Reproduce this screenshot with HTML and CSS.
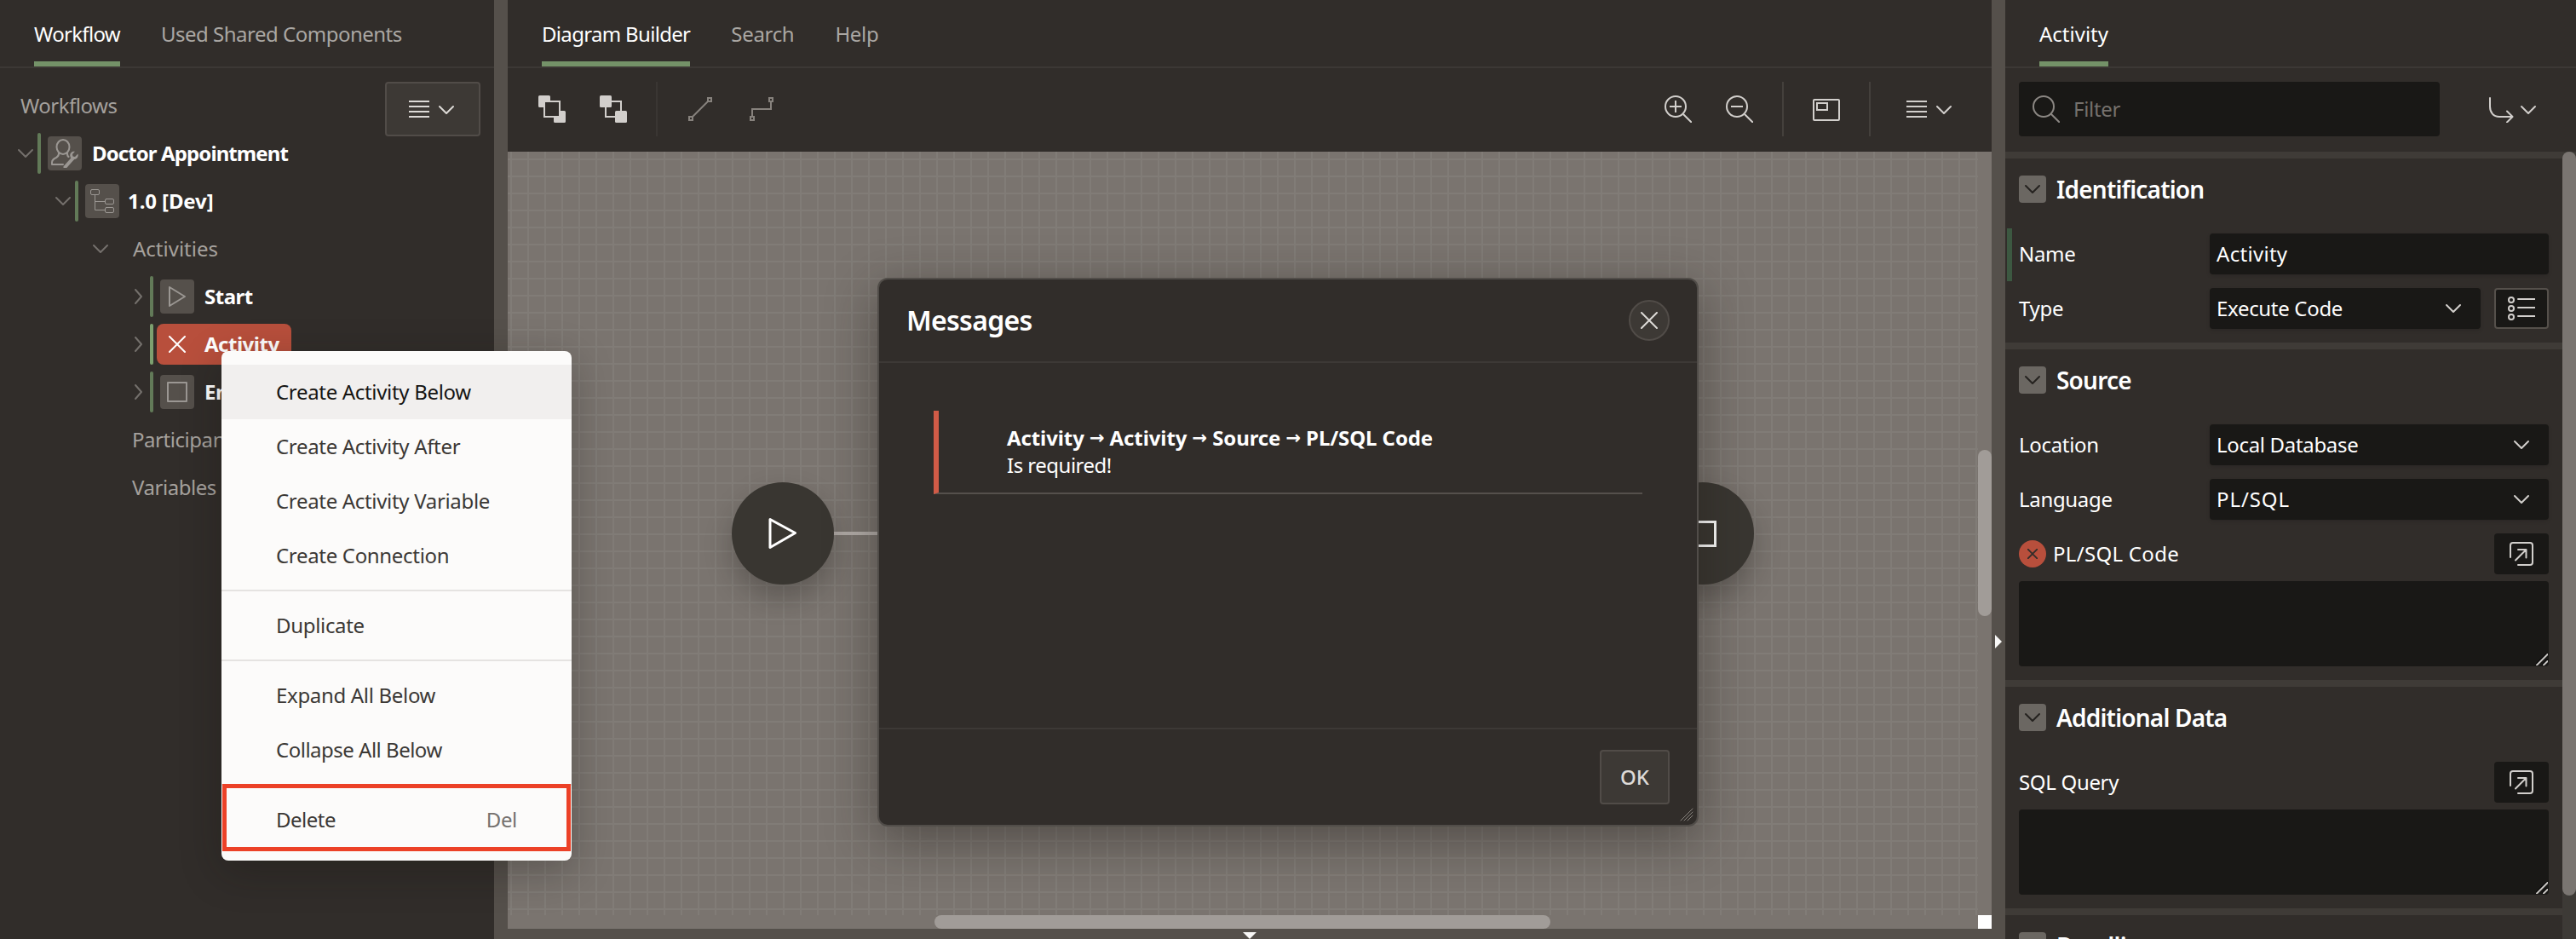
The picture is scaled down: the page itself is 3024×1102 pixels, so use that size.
FILE: index.html
```html
<!DOCTYPE html>
<html lang="en">
<head>
<meta charset="utf-8">
<title>Workflow Designer</title>
<link rel="stylesheet" href="styles.css">
</head>
<body>
<svg class="defs" aria-hidden="true">
  <symbol id="chev-down" viewBox="0 0 20 12"><path d="M2 2l8 8 8-8"/></symbol>
  <symbol id="chev-right" viewBox="0 0 12 20"><path d="M2 2l7 8-7 8"/></symbol>
  <symbol id="lines" viewBox="0 0 24 20"><path d="M0 1h24M0 7h24M0 13h24M0 19h24"/></symbol>
  <symbol id="cross" viewBox="0 0 20 20"><path d="M1 1l18 18M19 1L1 19"/></symbol>
  <symbol id="popup" viewBox="0 0 28 28"><path d="M1 18V4a3 3 0 0 1 3-3h20a3 3 0 0 1 3 3v20a3 3 0 0 1-3 3H10M7 21.500L19.500 9M10 9h9.500v9.500"/></symbol>
  <symbol id="grip" viewBox="0 0 14 14"><path class="grip-edge" d="M0 13L13 0M8 13l5-5"/><path d="M1 13.500L13.500 1M9 13.500l4.500-4.500"/></symbol>
</svg>
<div class="app">
  <aside class="panel tree-panel">
    <nav class="tabs">
      <span class="tab active">Workflow</span>
      <span class="tab snug">Used Shared Components</span>
    </nav>
    <div class="tree-head">
      <span class="tree-title">Workflows</span>
      <button class="menu-button"><svg class="i-lines"><use href="#lines"/></svg><svg class="i-down"><use href="#chev-down"/></svg></button>
    </div>
    <ul class="tree">
      <li class="row l1"><svg class="i-down"><use href="#chev-down"/></svg><i class="mark"></i>
        <span class="badge"><svg width="34" height="34" viewBox="0 0 34 34"><ellipse cx="15" cy="9.500" rx="7.500" ry="8.500"/><path d="M10 17c0 3-1 4-3 5-3 1.500-5 2.500-5 5.500V30h13M20 17c0 2 .5 3.500 1.500 4"/><path class="wrench" d="M17.500 33l8.500-9.500"/><path class="wrench-head" d="M32.500 17.500l-3.500 3.500-2.500-.5-.5-2.500 3-3.200c-3-.8-6 1.400-5.800 4.800.1 3 2.500 4.800 5.300 4.500 3-.4 4.900-3.500 4-6.600z"/></svg></span>
        <b class="tight">Doctor Appointment</b></li>
      <li class="row l2"><svg class="i-down"><use href="#chev-down"/></svg><i class="mark"></i>
        <span class="badge"><svg width="34" height="34" viewBox="0 0 34 34"><g class="thin"><rect x="3.500" y="3.500" width="10" height="6" rx="1.500"/><rect x="20.500" y="14.500" width="10" height="6" rx="1.500"/><rect x="20.500" y="24.500" width="10" height="6" rx="1.500"/><path d="M8.500 9.500v18h12M8.500 17.500h12"/></g></svg></span>
        <b>1.0 [Dev]</b></li>
      <li class="row l3"><svg class="i-down"><use href="#chev-down"/></svg><span class="plain loose">Activities</span></li>
      <li class="row l4"><svg class="i-right"><use href="#chev-right"/></svg><i class="mark"></i>
        <span class="badge"><svg width="24" height="28" viewBox="0 0 24 28"><path d="M3 3l18 11L3 25z"/></svg></span><b class="snug">Start</b></li>
      <li class="row l4"><svg class="i-right"><use href="#chev-right"/></svg><i class="mark lit"></i>
        <span class="selected"><svg width="20" height="20"><use href="#cross"/></svg><b class="snug">Activity</b></span></li>
      <li class="row l4"><svg class="i-right"><use href="#chev-right"/></svg><i class="mark"></i>
        <span class="badge"><svg width="24" height="24" viewBox="0 0 24 24"><rect x="1" y="1" width="22" height="22"/></svg></span><b>End</b></li>
      <li class="row l3 leaf"><span>Participants</span></li>
      <li class="row l3 leaf"><span>Variables</span></li>
    </ul>
  </aside>
  <div class="splitter"></div>
  <main class="panel diagram-panel">
    <nav class="tabs">
      <span class="tab active">Diagram Builder</span>
      <span class="tab">Search</span>
      <span class="tab">Help</span>
    </nav>
    <div class="toolbar">
      <svg class="tool" viewBox="0 0 32 32"><path class="fill" d="M1.500 0h11a1.500 1.500 0 0 1 1.500 1.500V14H1.500A1.500 1.500 0 0 1 0 12.500v-11A1.500 1.500 0 0 1 1.500 0zM18 18h12.500a1.500 1.500 0 0 1 1.500 1.500v11a1.500 1.500 0 0 1-1.500 1.500h-11a1.500 1.500 0 0 1-1.500-1.500z"/><rect class="cover" x="7" y="7" width="18" height="18"/></svg>
      <svg class="tool" viewBox="0 0 32 32"><rect x="7" y="7" width="18" height="18"/><rect class="fill" width="14" height="14" rx="1.500"/><rect class="fill" x="18" y="18" width="14" height="14" rx="1.500"/></svg>
      <i class="rule dim"></i>
      <svg class="tool off" viewBox="0 0 32 32"><rect x="3" y="25" width="4" height="4"/><rect x="25" y="3" width="4" height="4"/><path d="M7 25L25 7"/></svg>
      <svg class="tool off" viewBox="0 0 32 32"><rect x="3" y="25" width="4" height="4"/><rect x="25" y="3" width="4" height="4"/><path d="M5 25v-9h22V7"/></svg>
      <span class="grow"></span>
      <svg class="tool" viewBox="0 0 32 32"><circle cx="13" cy="13" r="12"/><path d="M22 22l10 10M13 6v14M6 13h14"/></svg>
      <svg class="tool" viewBox="0 0 32 32"><circle cx="13" cy="13" r="12"/><path d="M22 22l10 10M6 13h14"/></svg>
      <i class="rule"></i>
      <svg class="tool" viewBox="0 0 32 32"><rect x="1" y="5" width="30" height="24" rx="1"/><rect x="5" y="9" width="12" height="8"/></svg>
      <i class="rule"></i>
      <span class="list-menu"><svg class="i-lines"><use href="#lines"/></svg><svg class="i-down"><use href="#chev-down"/></svg></span>
    </div>
    <div class="canvas">
      <div class="grid"></div>
      <div class="link"></div>
      <div class="node start"><svg width="36" height="38" viewBox="0 0 36 38"><path d="M3 2.500l29.500 16L3 35.500z"/></svg></div>
      <div class="node end"><svg width="32" height="31" viewBox="0 0 32 31"><rect x="1.500" y="1.500" width="29" height="28"/></svg></div>
      <i class="thumb-v"></i><i class="thumb-h"></i><i class="corner"></i>
    </div>
    <div class="splitter-h"><i></i></div>
  </main>
  <div class="splitter collapse"><i></i></div>
  <aside class="panel props-panel">
    <nav class="tabs"><span class="tab active loose">Activity</span></nav>
    <div class="filter-bar">
      <div class="filter"><svg width="32" height="32" viewBox="0 0 32 32"><circle cx="13" cy="13" r="12"/><path d="M22 22l10 10"/></svg><span>Filter</span></div>
      <div class="goto"><svg width="30" height="32" viewBox="0 0 30 32"><path d="M2 3v10c0 7 4 12 11 12h15M22 18.500l6.500 6.500-6.500 6.500"/></svg><svg class="i-down"><use href="#chev-down"/></svg></div>
    </div>
    <div class="props">
      <div class="groups">
        <section class="group">
          <h2><span class="fold"><svg class="i-down"><use href="#chev-down"/></svg></span><span>Identification</span></h2>
          <div class="field changed"><label>Name</label><div class="input"><span class="wide-set">Activity</span></div></div>
          <div class="field"><label>Type</label><div class="input"><span>Execute Code</span><svg class="i-down"><use href="#chev-down"/></svg></div>
            <button class="square outlined"><svg width="32" height="28" viewBox="0 0 32 28"><circle cx="4" cy="4" r="3"/><circle cx="4" cy="14" r="3"/><circle cx="4" cy="24" r="3"/><path d="M12 3h20M12 13h20M12 23h20"/></svg></button></div>
        </section>
        <section class="group">
          <h2><span class="fold"><svg class="i-down"><use href="#chev-down"/></svg></span><span>Source</span></h2>
          <div class="field"><label>Location</label><div class="input"><span>Local Database</span><svg class="i-down"><use href="#chev-down"/></svg></div></div>
          <div class="field"><label>Language</label><div class="input"><span class="open-set">PL/SQL</span><svg class="i-down"><use href="#chev-down"/></svg></div></div>
          <div class="field"><span class="error"><svg width="12" height="12" viewBox="0 0 20 20"><use href="#cross"/></svg></span><label class="wide wide-set">PL/SQL Code</label><button class="square"><svg width="28" height="28"><use href="#popup"/></svg></button></div>
          <div class="area"><svg width="14" height="14"><use href="#grip"/></svg></div>
        </section>
        <section class="group">
          <h2><span class="fold"><svg class="i-down"><use href="#chev-down"/></svg></span><span>Additional Data</span></h2>
          <div class="field"><label class="wide">SQL Query</label><button class="square"><svg width="28" height="28"><use href="#popup"/></svg></button></div>
          <div class="area"><svg width="14" height="14"><use href="#grip"/></svg></div>
        </section>
        <section class="group">
          <h2><span class="fold"><svg class="i-down"><use href="#chev-down"/></svg></span><span>Deadline</span></h2>
        </section>
      </div>
      <div class="track"><i></i></div>
    </div>
  </aside>
</div>

<div class="dialog">
  <header><h1>Messages</h1><button class="close"><svg width="20" height="20"><use href="#cross"/></svg></button></header>
  <div class="dialog-body">
    <div class="message"><b>Activity <i>→</i> Activity <i>→</i> Source <i>→</i> PL/SQL Code</b><span class="snug">Is required!</span></div>
  </div>
  <footer><button class="ok">OK</button></footer>
  <svg class="resizer" viewBox="0 0 16 16"><path d="M1 15L15 1M5 15L15 5M9 15l6-6"/></svg>
</div>

<ul class="menu">
  <li class="item hover"><span>Create Activity Below</span></li>
  <li class="item"><span>Create Activity After</span></li>
  <li class="item"><span>Create Activity Variable</span></li>
  <li class="item"><span>Create Connection</span></li>
  <li class="sep"></li>
  <li class="item"><span>Duplicate</span></li>
  <li class="sep"></li>
  <li class="item"><span>Expand All Below</span></li>
  <li class="item"><span class="snug">Collapse All Below</span></li>
  <li class="sep"></li>
  <li class="item"><span class="snug">Delete</span><kbd>Del</kbd></li>
  <li class="callout"></li>
</ul>
</body>
</html>
```
FILE: styles.css
```css
* { box-sizing: border-box; }
body { margin: 0; height: 1102px; overflow: hidden; background: #312d2a; color: #fff; font: 24px/32px "Noto Sans", sans-serif; letter-spacing: -.32px; }
ul { margin: 0; padding: 0; list-style: none; }
h1, h2 { margin: 0; }
button { font: inherit; color: inherit; padding: 0; border: 0; background: none; }
svg { display: block; flex: none; fill: none; stroke: currentColor; stroke-width: 2; stroke-linecap: round; stroke-linejoin: round; }
.defs { position: absolute; width: 0; height: 0; }
.i-down { width: 20px; height: 12px; }
.i-right { width: 12px; height: 20px; }
.i-lines { width: 24px; height: 20px; stroke-linecap: butt; }

.tight { letter-spacing: -.9px; }
.snug { letter-spacing: -.5px; }
.loose { letter-spacing: 0; }
.wide-set { letter-spacing: .3px; }
.open-set { letter-spacing: .9px; }

.app { display: flex; height: 1102px; }
.panel { display: flex; flex-direction: column; }
.tree-panel { width: 580px; }
.diagram-panel { width: 1742px; }
.props-panel { width: 670px; }
.splitter { width: 16px; background: #55504b; }
.splitter.collapse { display: flex; align-items: center; padding: 404px 0 0 4px; }
.splitter.collapse i { border: 8px solid transparent; border-left-color: #f8f7f6; border-right: 0; }

.tabs { display: flex; flex: none; gap: 48px; height: 80px; padding-left: 40px; border-bottom: 2px solid #3c3835; }
.tab { color: #aaa7a3; line-height: 80px; height: 78px; white-space: nowrap; }
.tab.active { color: #fff; font-weight: 450; border-bottom: 6px solid #749268; }
.tab.active:not(.loose) { letter-spacing: -.68px; }

.tree-head { display: flex; justify-content: space-between; height: 72px; padding: 16px 16px 0 24px; color: #a5a19d; }
.tree-title { line-height: 56px; letter-spacing: -.5px; }
.menu-button { display: flex; align-items: center; gap: 10px; width: 112px; height: 64px; padding-left: 26px; border: 2px solid #514c48; border-radius: 4px; background: #3d3935; color: #dddad7; }
.menu-button .i-down { margin-top: 2px; }
.row { display: flex; align-items: center; height: 56px; color: #74706c; }
.l1 { padding-left: 20px; }
.l2 { padding-left: 64px; }
.l3 { padding-left: 108px; }
.l4 { padding-left: 157px; }
.leaf { padding-left: 155px; color: #a5a19d; letter-spacing: -.45px; }
.plain { margin-left: 28px; color: #a5a19d; }
.row b { color: #fff; font-weight: 700; }
.l2 b { margin-left: -2px; letter-spacing: -.1px; }
.mark { width: 4px; height: 48px; margin: 0 8px 0 4px; border-radius: 2px; background: #627a58; }
.l4 .mark { margin-left: 7px; }
.mark.lit { background: #7ca06f; }
.l4 .mark.lit { margin-right: 4px; }
.badge { display: flex; align-items: center; justify-content: center; width: 40px; height: 40px; margin-right: 12px; border-radius: 4px; background: #55504b; color: #9b9793; }
.thin { stroke-width: 1; }
.wrench { stroke-width: 4; }
.wrench-head { fill: currentColor; stroke: none; }
.selected { display: flex; align-items: center; gap: 22px; width: 158px; height: 48px; padding-left: 14px; border-radius: 8px; background: #b84f3c; color: #fff; }

.toolbar { display: flex; flex: none; align-items: center; height: 98px; padding: 0 36px 2px; color: #d2cfcc; }
.tool { width: 32px; height: 32px; margin-right: 40px; stroke-linejoin: miter; stroke-linecap: butt; }
.tool .fill { fill: currentColor; stroke: none; }
.tool .cover { fill: #312d2a; }
.tool.off { color: #87827d; }
.rule { width: 2px; height: 64px; margin: 0 34px 0 -6px; background: #44403c; }
.rule.dim { background: #3a3633; }
.rule + .list-menu { margin-left: 8px; }
.grow { flex: 1; }
.list-menu { display: flex; align-items: center; gap: 10px; margin-right: 10px; }
.list-menu .i-down { margin-top: 2px; }
.canvas { position: relative; flex: none; height: 912px; background: #7a746f; overflow: hidden; }
.grid { width: 1726px; height: 896px; background: linear-gradient(#817c77 2px, transparent 2px) 0 8px / 20px 20px, linear-gradient(90deg, #817c77 2px, transparent 2px) 3px 0 / 20px 20px; }
.node { position: absolute; display: flex; align-items: center; justify-content: center; top: 388px; width: 120px; height: 120px; border-radius: 50%; background: #393631; box-shadow: 0 16px 32px rgba(30, 26, 22, .3); }
.node svg { stroke-linejoin: miter; stroke-width: 3; }
.start { left: 263px; }
.start svg { stroke-linejoin: round; }
.end { left: 1343px; }
.link { position: absolute; left: 380px; top: 446px; width: 970px; height: 4px; background: #b4aeaa; }
.thumb-v, .thumb-h { position: absolute; border-radius: 8px; background: #a19c98; }
.thumb-v { right: 0; top: 350px; width: 16px; height: 195px; }
.thumb-h { left: 501px; bottom: 0; width: 723px; height: 16px; }
.corner { position: absolute; right: 0; bottom: 0; width: 16px; height: 16px; background: #fff; }
.splitter-h { display: flex; justify-content: center; height: 12px; padding-top: 4px; background: #55504b; }
.splitter-h i { border: 8px solid transparent; border-top-color: #f8f7f6; border-bottom: 0; }

.filter-bar { display: flex; flex: none; justify-content: space-between; height: 98px; padding: 16px 46px 0 16px; }
.filter { display: flex; align-items: center; gap: 16px; width: 494px; height: 64px; padding-left: 16px; border-radius: 4px; background: #191816; color: #8b8783; }
.filter span { color: #75716d; }
.goto { display: flex; align-items: center; gap: 7px; height: 64px; color: #d2cfcc; }
.goto .i-down { margin-top: 2px; }
.props { display: flex; height: 924px; overflow: hidden; }
.groups { width: 654px; }
.track { width: 16px; background: #3d3a36; }
.track i { display: block; height: 873px; border-radius: 8px; background: #7a7571; }
.group { padding: 20px 16px 16px; border-top: 8px solid #3f3b37; }
.group h2 { display: flex; align-items: center; gap: 12px; height: 32px; margin-bottom: 36px; font-size: 28px; font-weight: 650; letter-spacing: -.8px; }
.fold { display: flex; align-items: center; justify-content: center; width: 32px; height: 32px; border-radius: 4px; background: #6b6762; color: #25221f; }
.field { display: flex; align-items: center; height: 48px; margin-bottom: 16px; position: relative; }
.field label { width: 224px; }
.field label.wide { flex: 1; width: auto; }
.group .field:last-child { margin-bottom: 0; }
.changed::before { content: ""; position: absolute; left: -14px; top: -6px; width: 6px; height: 62px; background: #3c5841; }
.input { display: flex; flex: 1; align-items: center; justify-content: space-between; height: 48px; padding: 0 22px 0 8px; border-radius: 4px; background: #191816; box-shadow: 0 2px 4px rgba(0, 0, 0, .12); }
.input svg { color: #d2cfcc; }
.square { display: flex; align-items: center; justify-content: center; width: 64px; height: 48px; border-radius: 4px; background: #191816; color: #d2cfcc; }
.outlined { margin-left: 16px; border: 2px solid #55504b; }
.error { display: flex; align-items: center; justify-content: center; width: 32px; height: 32px; margin-right: 8px; border-radius: 50%; background: #b84f3c; color: #312d2a; }
.error svg { stroke-width: 3; }
.area { display: flex; align-items: flex-end; justify-content: flex-end; height: 100px; margin-top: -8px; padding: 1px; border-radius: 4px; background: #191816; color: #c9c6c3; }
.grip-edge { stroke: #000; }

.dialog { position: absolute; display: flex; flex-direction: column; left: 1030px; top: 326px; width: 964px; height: 644px; border: 2px solid #514d49; border-radius: 12px; background: #312d2a; box-shadow: 0 16px 60px rgba(30, 26, 22, .45); }
.dialog header { display: flex; align-items: center; justify-content: space-between; height: 98px; padding: 0 32px; border-bottom: 2px solid #3d3936; }
.dialog h1 { font-size: 32px; font-weight: 650; letter-spacing: -.7px; }
.close { display: flex; align-items: center; justify-content: center; width: 48px; height: 48px; border: 2px solid #514c48; border-radius: 50%; background: #3d3935; color: #dddad7; }
.dialog-body { flex: 1; padding: 56px 64px; }
.message { display: flex; flex-direction: column; align-items: flex-start; height: 98px; padding: 16px 0 0 80px; border-bottom: 2px solid #55504c; border-left: 6px solid #d15b47; }
.message b { letter-spacing: -.1px; }
.message b i { position: relative; top: -2px; font: bold 21px/24px "DejaVu Sans", sans-serif; }
.dialog footer { display: flex; justify-content: flex-end; height: 114px; padding: 24px 32px 0; border-top: 2px solid #3d3936; }
.ok { width: 82px; height: 64px; border: 2px solid #514c48; border-radius: 4px; background: #3d3935; color: #dddad7; font-weight: 500; }
.resizer { position: absolute; right: 4px; bottom: 4px; width: 16px; height: 16px; color: #8a8580; stroke-width: 1; }

.menu { position: absolute; left: 260px; top: 412px; width: 411px; height: 598px; padding: 16px 0; border-radius: 8px; background: #fcfbfa; color: #3b3835; box-shadow: 0 12px 48px rgba(20, 18, 14, .3); }
.item { display: flex; align-items: center; justify-content: space-between; height: 64px; padding: 0 64px; }
.item.hover { background: #f1efee; color: #161513; }
.item kbd { font: inherit; color: #75716e; }
.sep { height: 2px; margin: 8px 0; background: #e5e3e1; }
.callout { position: absolute; left: 1px; top: 508px; width: 409px; height: 79px; border: 5px solid #ec4127; }
```
